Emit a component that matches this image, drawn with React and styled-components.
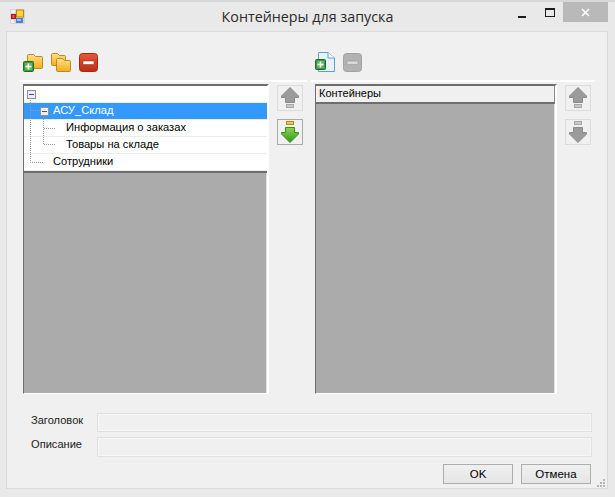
import React from "react";
import styled, { createGlobalStyle } from "styled-components";

const GlobalStyle = createGlobalStyle`
  * { box-sizing: border-box; }
  html, body { margin: 0; padding: 0; background: #e9e9e9; }
`;

const Window = styled.div`
  width: 615px;
  height: 497px;
  display: flex;
  flex-direction: column;
  background: #e9e9e9;
  border-top: 2px solid #d6d6d6;
  overflow: hidden;
  font-family: "Liberation Sans", Arial, sans-serif;
  font-size: 11px;
  color: #000;
`;

const TitleBar = styled.div`
  height: 29px;
  flex: none;
  display: grid;
  grid-template-columns: 1fr auto 1fr;
`;

const AppIcon = styled.div`
  padding: 7px 0 0 10px;
  line-height: 0;
`;

const Caption = styled.div`
  font-family: "Open Sans", "Noto Sans", sans-serif;
  font-size: 14.3px;
  line-height: 29px;
  color: #2b2b2b;
`;

const Controls = styled.div`
  display: flex;
  justify-content: flex-end;
  padding-right: 7px;
`;

const ControlBtn = styled.div`
  width: ${(p) => p.$w}px;
  height: 20px;
  display: flex;
  align-items: center;
  justify-content: center;
  background: ${(p) => (p.$close ? "#b9b9b9" : "transparent")};
`;

const Client = styled.div`
  position: relative;
  width: 602px;
  height: 458px;
  margin-left: 6px;
  padding: 0 12px;
  background: #f0f0f0;
  border: 1px solid #dadada;
`;

const Panes = styled.div`
  display: flex;
  gap: 4px;
`;

const Pane = styled.div`
  width: ${(p) => p.$w}px;
`;

const ToolStrip = styled.div`
  height: 50px;
  padding: 20px 0 8px 4px;
  display: flex;
  align-items: center;
  gap: 8px;
  border-bottom: 2px solid #fff;
  line-height: 0;
`;

const PaneBody = styled.div`
  padding: 2px 0 0 4px;
  display: flex;
  gap: 8px;
`;

const Sunken = styled.div`
  position: relative;
  width: ${(p) => p.$w}px;
  height: 310px;
  background: #ababab;
  border-style: solid;
  border-width: 2px 2px 1px 1px;
  border-color: #6e6e6e #fff #fff #6e6e6e;
  box-shadow: inset -1px 0 0 #e3e3e3;
`;

const Tree = styled.div`
  height: 87px;
  background: #fff;
  border-bottom: 2px solid #6e6e6e;
`;

const TreeRow = styled.div`
  height: 17px;
  line-height: 15px;
  font-size: 11.15px;
  padding-left: ${(p) => p.$indent}px;
  background: ${(p) => (p.$selected ? "#3399ff" : "#fff")};
  color: ${(p) => (p.$selected ? "#fff" : "#000")};
  border-bottom: 1px solid #ececec;
`;

const Connectors = styled.svg`
  position: absolute;
  left: 0;
  top: 0;
`;

const GridHeader = styled.div`
  height: 18px;
  line-height: 15px;
  padding-left: 3px;
  background: #f0f0f0;
  border-bottom: 2px solid #6e6e6e;
  box-shadow: inset -1px 0 0 #8a8a8a;
`;

const MoveColumn = styled.div`
  width: 26px;
  display: flex;
  flex-direction: column;
  gap: 8px;
  padding-top: 1px;
`;

const MoveBtn = styled.div`
  width: 26px;
  height: 26px;
  border: 1px solid ${(p) => (p.$active ? "#a9a9a9" : "#dcdcdc")};
  display: flex;
  align-items: center;
  justify-content: center;
`;

const Form = styled.div`
  margin-top: 19px;
  display: flex;
  flex-direction: column;
  gap: 5px;
`;

const FormRow = styled.div`
  display: flex;
  align-items: center;
  height: ${(p) => p.$h}px;
`;

const FormLabel = styled.div`
  width: 78px;
  padding-left: 12px;
  padding-bottom: 6px;
  font-size: 11.1px;
  color: #1a1a1a;
`;

const Field = styled.div`
  width: 495px;
  height: 100%;
  background: #f0f0f0;
  border: 1px solid #e0e0e0;
  box-shadow: inset 0 0 0 1px #f6f6f6;
`;

const Footer = styled.div`
  margin-top: 7px;
  display: flex;
  justify-content: flex-end;
  gap: 8px;
  padding-right: 4px;
`;

const Button = styled.div`
  width: 70px;
  height: 20px;
  line-height: 18px;
  text-align: center;
  font-size: 11.5px;
  border: 1px solid #adadad;
  background: linear-gradient(#f0f0f0, #e5e5e5);
`;

const Grip = styled.svg`
  position: absolute;
  right: 1px;
  bottom: 1px;
`;

const WindowIcon = () => (
  <svg width="15" height="15" viewBox="0 0 15 15">
    <rect x="0" y="0" width="15" height="15" fill="#d6d6d6" />
    <rect x="1" y="1" width="4" height="3" fill="#f1f1f1" />
    <rect x="1" y="11" width="3" height="3" fill="#f1f1f1" />
    <rect x="1" y="5" width="5" height="5" fill="#b01818" />
    <rect x="2.5" y="6" width="2" height="3" fill="#e85a4a" />
    <rect x="6" y="0.5" width="8" height="8" fill="#b8860f" />
    <rect x="7" y="1.5" width="6" height="6" fill="#ffd23c" />
    <rect x="6" y="9" width="7" height="5" fill="#4a7fd8" />
    <rect x="7" y="10" width="4" height="2" fill="#9cc3f2" />
  </svg>
);

const FolderShape = ({ x, y, w = 15, h = 13 }) => (
  <path
    d={`M${x + 0.5} ${y + 1.5} q0 -1 1 -1 h5 l2 2 h${w - 10} q1 0 1 1 v${h - 5} q0 1 -1 1 h${-(w - 3)} q-1 0 -1 -1 z`}
    fill="url(#fold)"
    stroke="#b58a2a"
  />
);

const GreenPlus = ({ x, y }) => (
  <g>
    <rect x={x + 0.5} y={y + 0.5} width="10" height="10" rx="1" fill="#3f9a3f" stroke="#24682c" />
    <rect x={x + 2} y={y + 2} width="7" height="7" fill="#5cb85c" />
    <path d={`M${x + 5.5} ${y + 2.5} v6 M${x + 2.5} ${y + 5.5} h6`} stroke="#fff" strokeWidth="1.6" />
  </g>
);

const FolderDefs = () => (
  <defs>
    <linearGradient id="fold" x1="0" y1="0" x2="0" y2="1">
      <stop offset="0" stopColor="#fde08a" />
      <stop offset="1" stopColor="#f7ac16" />
    </linearGradient>
  </defs>
);

const AddFolderIcon = () => (
  <svg width="20" height="19" viewBox="0 0 20 19">
    <FolderDefs />
    <FolderShape x={4} y={1} w={16} h={15} />
    <GreenPlus x={0} y={8} />
  </svg>
);

const OpenFolderIcon = () => (
  <svg width="20" height="19" viewBox="0 0 20 19">
    <FolderDefs />
    <FolderShape x={0} y={0} w={15} h={13} />
    <FolderShape x={5} y={5} w={15} h={14} />
  </svg>
);

const RemoveIcon = ({ disabled }) => (
  <svg width="19" height="19" viewBox="0 0 19 19">
    <defs>
      <linearGradient id="redbtn" x1="0" y1="0" x2="0" y2="1">
        <stop offset="0" stopColor="#e8583a" />
        <stop offset="1" stopColor="#bd2c14" />
      </linearGradient>
    </defs>
    <rect
      x="0.5"
      y="0.5"
      width="18"
      height="18"
      rx="3"
      fill={disabled ? "#b2b2b2" : "url(#redbtn)"}
      stroke={disabled ? "#a2a2a2" : "#9c2a14"}
    />
    <rect x="4" y="8" width="11" height="3.5" rx="0.5" fill={disabled ? "#d9d9d9" : "#fff"} stroke={disabled ? "#8f8f8f" : "#8e2410"} strokeWidth="0.5" />
  </svg>
);

const AddFileIcon = () => (
  <svg width="20" height="20" viewBox="0 0 20 20">
    <path d="M3.5 0.5 H13 L19.5 6 V19.5 H3.5 Z" fill="#e6f3fb" stroke="#5aa2c8" />
    <path d="M13 0.5 V6 H19.5" fill="#fff" stroke="#5aa2c8" />
    <GreenPlus x={0} y={7} />
  </svg>
);

const ArrowIcon = ({ up, active }) => {
  const fill = active ? "url(#greenarrow)" : "#9b9b9b";
  const stroke = active ? "#3f8a1d" : "#8a8a8a";
  return (
    <svg width="18" height="22" viewBox="0 0 18 22">
      <defs>
        <linearGradient id="greenarrow" x1="0" y1="0" x2="0" y2="1">
          <stop offset="0" stopColor="#8fd14f" />
          <stop offset="1" stopColor="#2f9a1a" />
        </linearGradient>
      </defs>
      {up ? (
        <g>
          <path d="M9 0.5 L17.5 9 V10.5 H13.5 V15.5 H4.5 V10.5 H0.5 V9 Z" fill={fill} stroke={stroke} />
          <rect x="5.5" y="17.5" width="7" height="3" fill="#c9c9c9" stroke="#a5a5a5" />
        </g>
      ) : (
        <g>
          <rect x="5.5" y="0.5" width="7" height="3" fill={active ? "#f2c84a" : "#c9c9c9"} stroke={active ? "#b08a20" : "#a5a5a5"} />
          <path d="M9 21.5 L17.5 13 V11.5 H13.5 V6.5 H4.5 V11.5 H0.5 V13 Z" fill={fill} stroke={stroke} />
        </g>
      )}
    </svg>
  );
};

const Expander = ({ x, y, dark }) => (
  <g>
    <rect x={x + 0.5} y={y + 0.5} width="8" height="8" fill="#eeeef2" stroke="#8f8f8f" />
    <path d={`M${x + 2} ${y + 4.5} h5`} stroke={dark ? "#555" : "#2f4f9f"} />
  </g>
);

export default function App() {
  return (
    <Window>
      <GlobalStyle />
      <TitleBar>
        <AppIcon>
          <WindowIcon />
        </AppIcon>
        <Caption>Контейнеры для запуска</Caption>
        <Controls>
          <ControlBtn $w={27}>
            <svg width="9" height="12" viewBox="0 0 9 12">
              <rect x="0" y="10" width="8" height="2" fill="#1c1c1c" />
            </svg>
          </ControlBtn>
          <ControlBtn $w={27}>
            <svg width="10" height="9" viewBox="0 0 10 9">
              <rect x="0.5" y="0.5" width="9" height="8" fill="none" stroke="#1c1c1c" />
              <rect x="0" y="0" width="10" height="2" fill="#1c1c1c" />
            </svg>
          </ControlBtn>
          <ControlBtn $w={45} $close>
            <svg width="9" height="9" viewBox="0 0 9 9">
              <path d="M1 1 L8 8 M8 1 L1 8" stroke="#fff" strokeWidth="1.6" />
            </svg>
          </ControlBtn>
        </Controls>
      </TitleBar>
      <Client>
        <Panes>
          <Pane $w={288}>
            <ToolStrip>
              <AddFolderIcon />
              <OpenFolderIcon />
              <RemoveIcon />
            </ToolStrip>
            <PaneBody>
              <Sunken $w={246}>
                <Tree>
                  <TreeRow $indent={0} />
                  <TreeRow $indent={29} $selected>
                    АСУ_Склад
                  </TreeRow>
                  <TreeRow $indent={42}>Информация о заказах</TreeRow>
                  <TreeRow $indent={42}>Товары на складе</TreeRow>
                  <TreeRow $indent={29}>Сотрудники</TreeRow>
                </Tree>
                <Connectors width="60" height="85">
                  <path
                    d="M6.5 12 V76.5 H19 M7 24.5 H16 M19.5 29 V58.5 H31 M20 42.5 H31"
                    fill="none"
                    stroke="#9a9a9a"
                    strokeDasharray="1 1"
                  />
                  <Expander x={3} y={4} />
                  <Expander x={16} y={21} dark />
                </Connectors>
              </Sunken>
              <MoveColumn>
                <MoveBtn>
                  <ArrowIcon up />
                </MoveBtn>
                <MoveBtn $active>
                  <ArrowIcon active />
                </MoveBtn>
              </MoveColumn>
            </PaneBody>
          </Pane>
          <Pane $w={284}>
            <ToolStrip>
              <AddFileIcon />
              <RemoveIcon disabled />
            </ToolStrip>
            <PaneBody>
              <Sunken $w={242}>
                <GridHeader>Контейнеры</GridHeader>
              </Sunken>
              <MoveColumn>
                <MoveBtn>
                  <ArrowIcon up />
                </MoveBtn>
                <MoveBtn>
                  <ArrowIcon />
                </MoveBtn>
              </MoveColumn>
            </PaneBody>
          </Pane>
        </Panes>
        <Form>
          <FormRow $h={19}>
            <FormLabel>Заголовок</FormLabel>
            <Field />
          </FormRow>
          <FormRow $h={20}>
            <FormLabel>Описание</FormLabel>
            <Field />
          </FormRow>
        </Form>
        <Footer>
          <Button>OK</Button>
          <Button>Отмена</Button>
        </Footer>
        <Grip width="9" height="9" viewBox="0 0 9 9">
          <path d="M6 1 h2 v2 h-2 z M3 4 h2 v2 h-2 z M6 4 h2 v2 h-2 z M0 7 h2 v2 h-2 z M3 7 h2 v2 h-2 z M6 7 h2 v2 h-2 z" fill="#b5b5b5" />
        </Grip>
      </Client>
    </Window>
  );
}
